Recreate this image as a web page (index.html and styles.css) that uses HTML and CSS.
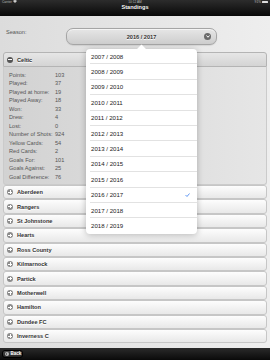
FILE: index.html
```html
<!DOCTYPE html>
<html lang="en">
<head>
  <meta charset="UTF-8">
  <meta name="viewport" content="width=device-width, initial-scale=1.0">
  <link rel="stylesheet" href="styles.css">
</head>
<body>
  <div class="top">
    <div class="status">
      <span class="carrier">Carrier <svg width="4" height="3" viewBox="0 0 8 6"><path d="M4 6 L0 2 A6 6 0 0 1 8 2 Z" fill="#ccc"/></svg></span>
      <span class="time">10:12 AM</span>
      <span class="battery">91% <i class="batt"></i></span>
    </div>
    <h1 class="title">Standings</h1>
  </div>

  <div class="content">
    <div class="season-row">
      <label for="season">Season:</label>
      <button id="season" class="select">
        <span class="select-text">2016 / 2017</span>
        <span class="select-icon">
          <svg width="4" height="3" viewBox="0 0 8 6"><polyline points="1,1 4,4.5 7,1" fill="none" stroke="#fff" stroke-width="2"/></svg>
        </span>
      </button>
    </div>

    <div class="set">
      <div class="team open">
        <div class="team-head"><span class="icon minus"></span>Celtic</div>
        <div class="team-body">
          <dl class="stats">
            <dt>Points:</dt><dd>103</dd>
            <dt>Played:</dt><dd>37</dd>
            <dt>Played at home:</dt><dd>19</dd>
            <dt>Played Away:</dt><dd>18</dd>
            <dt>Won:</dt><dd>33</dd>
            <dt>Drew:</dt><dd>4</dd>
            <dt>Lost:</dt><dd>0</dd>
            <dt>Number of Shots:</dt><dd>924</dd>
            <dt>Yellow Cards:</dt><dd>54</dd>
            <dt>Red Cards:</dt><dd>2</dd>
            <dt>Goals For:</dt><dd>101</dd>
            <dt>Goals Against:</dt><dd>25</dd>
            <dt>Goal Difference:</dt><dd>76</dd>
          </dl>
        </div>
      </div>
      <div class="team"><div class="team-head"><span class="icon plus"></span>Aberdeen</div></div>
      <div class="team"><div class="team-head"><span class="icon plus"></span>Rangers</div></div>
      <div class="team"><div class="team-head"><span class="icon plus"></span>St Johnstone</div></div>
      <div class="team"><div class="team-head"><span class="icon plus"></span>Hearts</div></div>
      <div class="team"><div class="team-head"><span class="icon plus"></span>Ross County</div></div>
      <div class="team"><div class="team-head"><span class="icon plus"></span>Kilmarnock</div></div>
      <div class="team"><div class="team-head"><span class="icon plus"></span>Partick</div></div>
      <div class="team"><div class="team-head"><span class="icon plus"></span>Motherwell</div></div>
      <div class="team"><div class="team-head"><span class="icon plus"></span>Hamilton</div></div>
      <div class="team"><div class="team-head"><span class="icon plus"></span>Dundee FC</div></div>
      <div class="team"><div class="team-head"><span class="icon plus"></span>Inverness C</div></div>
    </div>
  </div>

  <div class="footer">
    <a class="back"><span class="back-icon"></span>Back</a>
  </div>

  <ul class="popover">
    <li class="opt">2007 / 2008</li>
    <li class="opt">2008 / 2009</li>
    <li class="opt">2009 / 2010</li>
    <li class="opt">2010 / 2011</li>
    <li class="opt">2011 / 2012</li>
    <li class="opt">2012 / 2013</li>
    <li class="opt">2013 / 2014</li>
    <li class="opt">2014 / 2015</li>
    <li class="opt">2015 / 2016</li>
    <li class="opt selected">2016 / 2017
      <svg width="5" height="4" viewBox="0 0 10 8"><polyline points="1,4 4,7 9,1" fill="none" stroke="#3a7ff0" stroke-width="1.6"/></svg>
    </li>
    <li class="opt">2017 / 2018</li>
    <li class="opt">2018 / 2019</li>
  </ul>
</body>
</html>
```

FILE: styles.css
```css
* {
  box-sizing: border-box;
}

body {
  margin: 0;
  height: 360px;
  font-family: "Liberation Sans", Arial, sans-serif;
  font-size: 5.6px;
  color: #333;
  display: flex;
  flex-direction: column;
  background: linear-gradient(to right, #dcdcdc, #eeeeee);
  position: relative;
  overflow: hidden;
}

/* header */
.top {
  height: 16px;
  flex-shrink: 0;
  background: linear-gradient(#2c2c2c, #080808);
  color: #fff;
}

.status {
  height: 4px;
  display: grid;
  grid-template-columns: 1fr auto 1fr;
  align-items: center;
  padding: 0 2px;
  font-size: 3.2px;
  color: #bbb;
}

.battery {
  justify-self: end;
  display: flex;
  align-items: center;
  gap: 1px;
}

.batt {
  display: inline-block;
  width: 6px;
  height: 2.5px;
  background: #ddd;
  border-radius: 0.5px;
}

.title {
  margin: 0;
  font-size: 5.6px;
  line-height: 7px;
  font-weight: bold;
  text-align: center;
  text-shadow: 0 -0.5px 0 #000;
}

/* content */
.content {
  flex: 1;
  padding: 12px 3px 0;
}

.season-row {
  display: flex;
  align-items: flex-start;
}

.season-row label {
  width: 63px;
  padding-left: 3px;
  line-height: 6px;
  margin-top: 0.5px;
  color: #555;
}

.select {
  width: 151px;
  height: 17px;
  border: 1px solid #a5a5a5;
  border-radius: 7px;
  background: linear-gradient(#e6e6e6, #cdcdcd);
  box-shadow: inset 0 1px 0 #f4f4f4, 0 0.5px 1px rgba(0, 0, 0, 0.15);
  display: flex;
  align-items: center;
  padding: 0 5px 0 12px;
  font-family: inherit;
  font-size: 5.6px;
  font-weight: bold;
  color: #333;
  text-shadow: 0 0.5px 0 #fff;
}

.select-text {
  flex: 1;
  text-align: center;
}

.select-icon {
  width: 7px;
  height: 7px;
  border-radius: 50%;
  background: #6a6a6a;
  display: grid;
  place-items: center;
}

.set {
  margin-top: 7px;
}

.team-head {
  height: 14.4px;
  display: flex;
  align-items: center;
  gap: 4px;
  padding-left: 3px;
  border: 1px solid #c6c6c6;
  border-radius: 3px;
  background: linear-gradient(#fdfdfd, #e8e8e8);
  font-weight: bold;
  color: #333;
  text-shadow: 0 0.5px 0 #fff;
}

.open .team-head {
  height: 15px;
  border-color: #b4b4b4;
  border-radius: 3px 3px 0 0;
  background: linear-gradient(#e6e6e6, #d4d4d4);
}

.team-body {
  border: 1px solid #cbcbcb;
  border-top: 0;
  border-radius: 0 0 3px 3px;
  background: linear-gradient(to right, #d2d2d2, #e6e6e6);
  padding: 3.75px 5px 2.75px;
}

.stats {
  margin: 0;
  display: grid;
  grid-template-columns: 46px auto;
  line-height: 8.5px;
  color: #555;
}

.stats dd {
  margin: 0;
}

/* plus / minus circle icons */
.icon {
  width: 6px;
  height: 6px;
  border-radius: 50%;
  background: #8c8c8c;
  display: grid;
  place-items: center;
  flex-shrink: 0;
}

.icon::before,
.icon::after {
  content: "";
  grid-area: 1 / 1;
  width: 3.4px;
  height: 1px;
  background: #fff;
}

.icon.plus::after {
  width: 1px;
  height: 3.4px;
}

.icon.minus {
  background: #555;
}

.icon.minus::after {
  display: none;
}

/* footer */
.footer {
  height: 12.5px;
  flex-shrink: 0;
  background: linear-gradient(#2a2a2a, #0a0a0a);
  display: flex;
  align-items: center;
  padding-left: 2px;
}

.back {
  height: 8.5px;
  width: 21px;
  display: flex;
  align-items: center;
  gap: 1.5px;
  padding-left: 2px;
  border: 0.5px solid #000;
  border-radius: 3px;
  background: linear-gradient(#4a4a4a, #262626);
  color: #fff;
  font-weight: bold;
  font-size: 4.5px;
}

.back-icon {
  width: 4px;
  height: 4px;
  border-radius: 50%;
  background: #bbb;
  display: grid;
  place-items: center;
}

.back-icon::before {
  content: "";
  width: 0;
  height: 0;
  border-top: 1px solid transparent;
  border-bottom: 1px solid transparent;
  border-right: 1.4px solid #222;
  margin-left: -0.5px;
}

/* season picker popover */
.popover {
  position: absolute;
  left: 86px;
  top: 49px;
  width: 111px;
  margin: 0;
  padding: 0;
  list-style: none;
  background: #fff;
  border-radius: 4px;
  box-shadow: 0 1px 6px rgba(0, 0, 0, 0.25);
}

.popover::before {
  content: "";
  position: absolute;
  left: 52px;
  top: -3.5px;
  width: 7px;
  height: 7px;
  background: #fff;
  transform: rotate(45deg);
}

.opt {
  position: relative;
  height: 15.4px;
  margin-left: 4px;
  padding: 0 7px 0 1px;
  display: flex;
  align-items: center;
  justify-content: space-between;
  border-bottom: 0.6px solid #e2e2e2;
  font-size: 6.1px;
  color: #222;
}

.opt:last-child {
  border-bottom: 0;
}
```
